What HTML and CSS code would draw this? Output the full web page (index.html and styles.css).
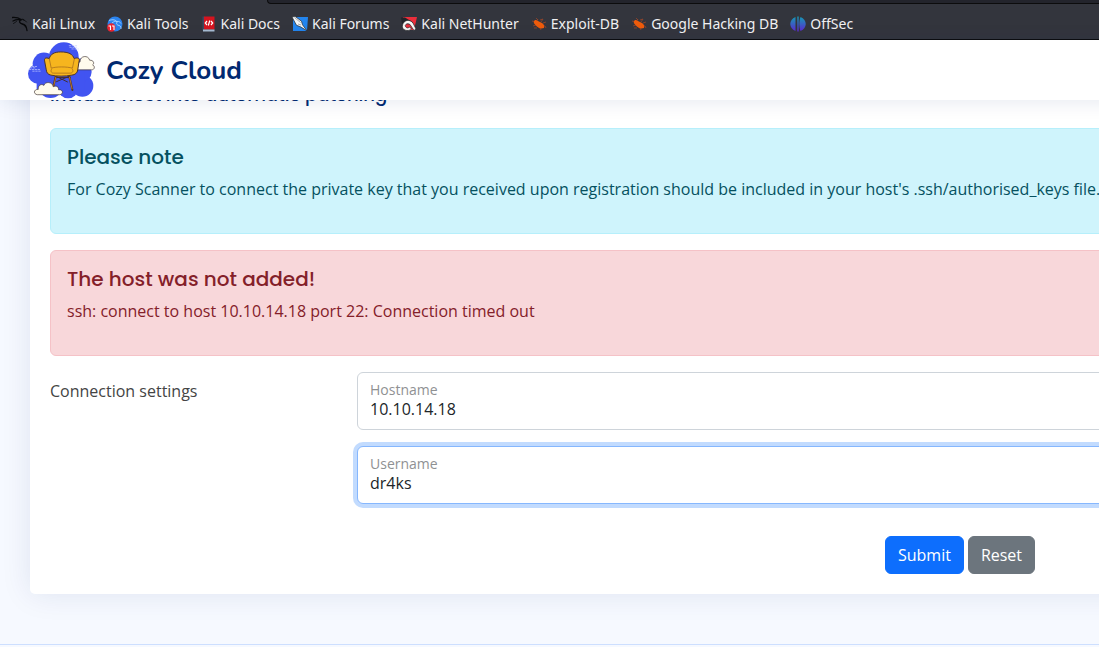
FILE: index.html
```html
<!DOCTYPE html>
<html lang="en">
<head>
<meta charset="utf-8">
<title>Cozy Cloud</title>
<link rel="stylesheet" href="styles.css">
</head>
<body>
<div class="toolbar"><div class="urlbar"></div></div>
<nav class="bookmarks" aria-label="Bookmarks">
  <a class="bookmark" href="#"><svg class="icon" viewBox="0 0 16 16" fill="none" stroke="#08090b" stroke-linecap="round"><path d="M.5 1.500c3-.2 6 .2 8.500 2M1 5c3-1.500 5.500-1.700 8-.8M9 3.500c-2.500 2-1.500 4 1.500 4.500 2.500.3 4 2 4.500 6.500" stroke-width="1.300"/><path d="M8 3.500c3-.3 5 .3 6.500 2.500M11 3l1 1.500M1.500 7.500l3-2M10 8c2 .5 2.500 1.500 3.500 3" stroke-width=".8"/></svg>Kali Linux</a>
  <a class="bookmark" href="#"><svg class="icon" viewBox="0 0 16 16"><circle cx="8" cy="8" r="7.500" fill="#2b83ee"/><path d="M2 4.500c4-1.500 7-.5 8 1.500-1 2 0 3 2 3.500 2 .4 2 2 2 3.500M5 7c2-1.500 3-2 5-1.500 2-.4 3 .5 4 2" stroke="#a8d5ff" fill="none" stroke-width=".9"/><circle cx="4.300" cy="11.500" r="4.200" fill="#e92430"/><path d="M1.500 10h2v4m1.500-4h2v4" stroke="#fff" fill="none" stroke-width="1.100"/></svg>Kali Tools</a>
  <a class="bookmark" href="#"><svg class="icon" viewBox="0 0 16 16"><path d="M1.500.5h2v14h-2z" fill="#3a4860"/><path d="M3 .5h10.500v13H3z" fill="#d4141f"/><path d="M2 13.500h11.500v2H2z" fill="#a6bcd2"/><path d="M6 5L4.300 7 6 9m4-4l1.700 2L10 9M8.800 4.500l-1.500 5" stroke="#fff" fill="none" stroke-width="1.200"/></svg>Kali Docs</a>
  <a class="bookmark" href="#"><svg class="icon" viewBox="0 0 16 16"><path d="M1 1h15l-1 14H1z" fill="#2385ee"/><path d="M0 1l3-.7 6.500 5 1 3.500 4.500 6-6.500-4-4-1.500z" fill="#f4f5f5" stroke="#24282d" stroke-width=".7"/><path d="M2.500 1.500l6 5M6 8l3 1" stroke="#6d7780" stroke-width=".6"/></svg>Kali Forums</a>
  <a class="bookmark" href="#"><svg class="icon" viewBox="0 0 16 16"><path d="M2 1h14l-3 13H3z" fill="#eb2e3b"/><path d="M0 1.500h4l8 5-2 2-9-1z" fill="#22252a"/><path d="M1.500 9C3 3.500 9 3 12 7l3 6-2 1.500-4-6C6.500 6.500 3.500 8.500 4.500 10.500c1 2 3 1.500 4 .5l2 2C7.500 16 0 14.500 1.500 9z" fill="#f8f7f5" stroke="#24262a" stroke-width=".7"/></svg>Kali NetHunter</a>
  <a class="bookmark" href="#"><svg class="icon" viewBox="0 0 16 16"><path d="M1 5l4 1L7 3M5 2l2 2m2 0l3-1-2 3m2 1l3-1m-5 3l4 1 1 2M2 10l3-1m1 3H3m6 0l1 2" fill="none" stroke="#99452a" stroke-width=".8"/><path d="M3 5.500c0-1.500 2-2 3-1l5 2.500c2 1 2.500 3 2 5-3 1-6 .5-9-3.500C3 7.500 2.500 6.500 3 5.500z" fill="#ee5b0b"/></svg>Exploit-DB</a>
  <a class="bookmark" href="#"><svg class="icon" viewBox="0 0 16 16"><path d="M1 5l4 1L7 3M5 2l2 2m2 0l3-1-2 3m2 1l3-1m-5 3l4 1 1 2M2 10l3-1m1 3H3m6 0l1 2" fill="none" stroke="#99452a" stroke-width=".8"/><path d="M3 5.500c0-1.500 2-2 3-1l5 2.500c2 1 2.500 3 2 5-3 1-6 .5-9-3.500C3 7.500 2.500 6.500 3 5.500z" fill="#ee5b0b"/></svg>Google Hacking DB</a>
  <a class="bookmark" href="#"><svg class="icon" viewBox="0 0 16 16"><defs><linearGradient id="o" x2="0" y2="1"><stop stop-color="#149bb4"/><stop offset="1" stop-color="#5d27d0"/></linearGradient></defs><path d="M5.500 1v14c-7-3-7-11 0-14zM7.300.5h1.400v15H7.300zM10.500 1c7 3 7 11 0 14-1.500-4-1.500-10 0-14z" fill="url(#o)"/></svg>OffSec</a>
</nav>
<header class="header">
  <a class="brand" href="#">
    <svg class="logo" viewBox="24 10 202 172" aria-hidden="true">
      <g fill="#4154f1"><circle cx="72" cy="76" r="34"/><circle cx="54" cy="106" r="30"/><circle cx="132" cy="56" r="45"/><circle cx="92" cy="142" r="37"/><circle cx="145" cy="150" r="30"/><circle cx="188" cy="142" r="33"/><circle cx="186" cy="100" r="30"/><path d="M50 60h145v95H50z"/></g>
      <path d="M147 21h26m-24 5h23m-17 5h22M30 88h18m-22 5h35m-24 5h27M35 84h16" stroke="#cbd1ff" stroke-width="2" stroke-dasharray="7 2"/>
      <path d="M174 94c-10-10-5-23 7-24-1-19 25-22 29-5 12-1 15 10 9 14 8 4 6 15-3 15z" fill="#fffbed" stroke="#403431" stroke-width="2"/>
      <g fill="none" stroke="#422d30" stroke-width="3"><path d="M108 113l36 18m5-18l-40 17M106 117h47"/></g>
      <path d="M108 112l-10 43m50-43l10 43" stroke="#51332a" stroke-width="6" stroke-linecap="round"/><path d="M108 115l-9 37m50-37l8 37" stroke="#ca8133" stroke-width="2.500"/>
      <path d="M74 67c-2-8 4-11 14-7 4-13 14-20 35-20 24 0 36 7 40 20 11-4 18-1 15 8l-4 26c-1 10-8 15-18 16-20 4-45 4-63 0-9-2-13-7-14-16z" fill="#f6b51e" stroke="#4d3429" stroke-width="3" stroke-linejoin="round"/>
      <path d="M88 60l6 29c14-5 48-5 64 0l6-29M96 91c-5 6-2 13 5 13h50c8 0 11-7 6-13" fill="none" stroke="#98601b" stroke-width="2"/>
      <path d="M52 169c-13-2-11-17 3-16-2-11 9-19 17-12 3-13 27-11 28 4 9-5 18 1 16 9 14-2 16 13 4 15z" fill="#fffbed" stroke="#403431" stroke-width="2"/>
    </svg>
    <span class="brand-name">Cozy Cloud</span>
  </a>
</header>
<main class="main">
  <section class="card">
    <h5 class="card-title">Include host into automatic patching</h5>
    <div class="alert info"><h4 class="alert-title">Please note</h4><p class="alert-text">For Cozy Scanner to connect the private key that you received upon registration should be included in your host's .ssh/authorised_keys file.</p></div>
    <div class="alert danger" role="alert"><h4 class="alert-title">The host was not added!</h4><p class="alert-text">ssh: connect to host 10.10.14.18 port 22: Connection timed out</p></div>
    <form>
      <fieldset class="settings" aria-labelledby="settings-label">
        <div class="settings-label" id="settings-label">Connection settings</div>
        <div class="fields">
          <div class="field"><label class="label" for="host">Hostname</label><input class="input" id="host" type="text" value="10.10.14.18"></div>
          <div class="field focused"><label class="label" for="username">Username</label><input class="input" id="username" type="text" value="dr4ks"></div>
        </div>
      </fieldset>
      <div class="actions"><button class="button primary" type="submit">Submit</button><button class="button secondary" type="reset">Reset</button></div>
    </form>
  </section>
</main>
<footer class="footer"></footer>
</body>
</html>
```
FILE: styles.css
```css
* { box-sizing: border-box; }
body {
  margin: 0;
  overflow: hidden;
  background: #f6f9ff;
  color: #444;
  font: 16px/24px "Open Sans", sans-serif;
}
.toolbar { height: 4px; padding-left: 267px; background: #33353d; }
.urlbar { height: 4px; background: #23242c; border: 1px solid #0c0c0d; border-top: 0; border-right: 0; border-radius: 0 0 0 4px; }
.bookmarks {
  display: flex;
  align-items: center;
  gap: 12px;
  height: 36px;
  padding: 4px 12px 0;
  background: #33353d;
  border-bottom: 1px solid #0c0c0d;
  font: 14px/20px "Noto Sans", sans-serif;
}
.bookmark { display: flex; align-items: center; gap: 4px; color: #f0f0f2; text-decoration: none; white-space: nowrap; }
.icon { width: 16px; height: 16px; flex: none; }
.header {
  position: relative;
  z-index: 2;
  display: flex;
  align-items: center;
  min-width: 1920px;
  height: 60px;
  padding-left: 28px;
  background: #fff;
  box-shadow: 0 2px 20px rgba(1, 41, 112, .1);
}
.brand { display: flex; align-items: center; gap: 11px; color: #012970; text-decoration: none; }
.logo { width: 67px; height: 57px; }
.brand-name { padding-top: 2px; font: 700 26px/32px "Nunito", "Open Sans", sans-serif; }
.main { min-width: 1920px; margin-top: -29px; padding: 0 30px 50px; }
.card { padding: 0 20px 20px; background: #fff; border-radius: 5px; box-shadow: 0 0 30px rgba(1, 41, 112, .1); }
.card-title { margin: 0; padding: 13px 0 22px; color: #012970; font: 500 18px/22px "Poppins", "Inter", sans-serif; }
.alert { margin-bottom: 16px; padding: 16px; border: 1px solid; border-radius: 6px; }
.info { color: #055160; background: #cff4fc; border-color: #b6effb; }
.danger { color: #842029; background: #f8d7da; border-color: #f5c2c7; }
.alert-title { margin: 0 0 8px; font: 500 20px/24px "Poppins", "Inter", sans-serif; }
.alert-text { margin: 0 0 16px; }
.settings { display: grid; grid-template-columns: 283px 1fr; gap: 24px; margin: 0 0 32px; padding: 0; border: 0; }
.settings-label { padding-top: 7px; }
.fields { display: grid; gap: 16px; }
.field { display: flex; flex-direction: column; height: 58px; padding: 8px 12px; background: #fff; border: 1px solid #ced4da; border-radius: 6px; }
.focused { border-color: #86b7fe; box-shadow: 0 0 0 4px rgba(13, 110, 253, .25); }
.label { color: #8f9193; font-size: 14px; line-height: 18px; }
.input { width: 100%; height: 20px; padding: 0; border: 0; outline: 0; background: transparent; color: #212529; font: inherit; line-height: 20px; }
.actions { display: flex; justify-content: center; gap: 4px; }
.button { padding: 6px 12px; border: 1px solid; border-radius: 6px; color: #fff; font: inherit; }
.primary { background: #0d6efd; border-color: #0d6efd; }
.secondary { background: #6c757d; border-color: #6c757d; }
.footer { border-top: 1px solid #cddfff; }
```
